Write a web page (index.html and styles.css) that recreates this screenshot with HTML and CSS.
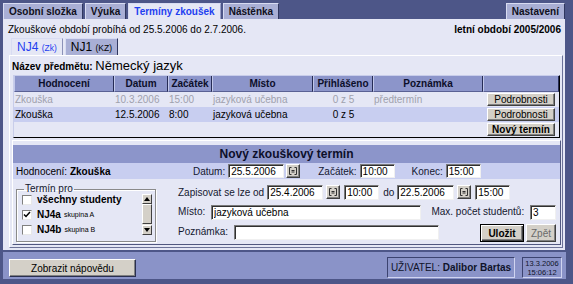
FILE: index.html
```html
<!DOCTYPE html>
<html lang="cs">
<head>
    <meta charset="UTF-8">
    <title>Termíny zkoušek</title>
    <link rel="stylesheet" href="styles.css">
</head>
<body>
<div class="topbar">
    <div class="tabs">
        <span class="tab">Osobní složka</span>
        <span class="tab">Výuka</span>
        <span class="tab active">Termíny zkoušek</span>
        <span class="tab">Nástěnka</span>
    </div>
    <span class="tab">Nastavení</span>
</div>

<div class="panel">
    <div class="info">
        <span>Zkouškové období probíhá od 25.5.2006 do 2.7.2006.</span>
        <b>letní období 2005/2006</b>
    </div>

    <div class="subtabs">
        <span class="subtab active">NJ4 <small>(Zk)</small></span>
        <span class="subtab">NJ1 <small>(KZ)</small></span>
    </div>

    <div class="box">
        <div class="subject"><b>Název předmětu:</b> <span class="subject-name">Německý jazyk</span></div>

        <table class="terms">
            <colgroup>
                <col style="width: 100px">
                <col style="width: 54px">
                <col style="width: 44px">
                <col style="width: 101px">
                <col style="width: 60px">
                <col style="width: 110px">
                <col>
            </colgroup>
            <thead>
            <tr>
                <th>Hodnocení</th>
                <th>Datum</th>
                <th>Začátek</th>
                <th>Místo</th>
                <th>Přihlášeno</th>
                <th>Poznámka</th>
                <th></th>
            </tr>
            </thead>
            <tbody>
            <tr class="past">
                <td>Zkouška</td>
                <td>10.3.2006</td>
                <td>15:00</td>
                <td>jazyková učebna</td>
                <td class="center">0 z 5</td>
                <td>předtermín</td>
                <td class="right"><button class="btn">Podrobnosti</button></td>
            </tr>
            <tr class="selected">
                <td>Zkouška</td>
                <td>12.5.2006</td>
                <td>8:00</td>
                <td>jazyková učebna</td>
                <td class="center">0 z 5</td>
                <td></td>
                <td class="right"><button class="btn">Podrobnosti</button></td>
            </tr>
            <tr>
                <td colspan="6"></td>
                <td class="right"><button class="btn bold">Nový termín</button></td>
            </tr>
            </tbody>
        </table>

        <div class="newterm">
            <div class="newterm-title">Nový zkouškový termín</div>

            <div class="first-row">
                <span class="grade">Hodnocení: <b>Zkouška</b></span>
                <span class="lbl">Datum:</span>
                <input class="field w56" value="25.5.2006">
                <span class="cal"><svg width="8" height="8" viewBox="0 0 8 8"><path d="M2.5 0.5h-2v7h2M5.5 0.5h2v7h-2M2.5 3.5h3M2.5 5h3" stroke="#303030" fill="none"/></svg></span>
                <span class="lbl gap18">Začátek:</span>
                <input class="field w35" value="10:00">
                <span class="lbl gap17">Konec:</span>
                <input class="field w35" value="15:00">
            </div>

            <div class="newterm-body">
                <fieldset class="targets">
                    <legend>Termín pro</legend>
                    <div class="target-list">
                        <div class="targets-rows">
                            <div class="target"><span class="check"></span><b>všechny studenty</b></div>
                            <div class="target"><span class="check"><svg width="8" height="8" viewBox="0 0 8 8"><path d="M1 3.5l2 2 4-4.5" stroke="#000" stroke-width="1.5" fill="none"/></svg></span><b>NJ4a</b> <small>skupina A</small></div>
                            <div class="target"><span class="check"></span><b>NJ4b</b> <small>skupina B</small></div>
                        </div>
                        <div class="scrollbar">
                            <span class="arrow"><svg width="6" height="4" viewBox="0 0 6 4"><path d="M0 4L3 0 6 4z" fill="#000"/></svg></span>
                            <span class="thumb"></span>
                            <span class="arrow down"><svg width="6" height="4" viewBox="0 0 6 4"><path d="M0 0L3 4 6 0z" fill="#000"/></svg></span>
                        </div>
                    </div>
                </fieldset>

                <div class="fields">
                    <div class="frow">
                        <span class="lbl">Zapisovat se lze od</span>
                        <input class="field w56" value="25.4.2006">
                        <span class="cal"><svg width="8" height="8" viewBox="0 0 8 8"><path d="M2.5 0.5h-2v7h2M5.5 0.5h2v7h-2M2.5 3.5h3M2.5 5h3" stroke="#303030" fill="none"/></svg></span>
                        <input class="field w35" value="10:00">
                        <span class="lbl do">do</span>
                        <input class="field w57" value="22.5.2006">
                        <span class="cal"><svg width="8" height="8" viewBox="0 0 8 8"><path d="M2.5 0.5h-2v7h2M5.5 0.5h2v7h-2M2.5 3.5h3M2.5 5h3" stroke="#303030" fill="none"/></svg></span>
                        <input class="field w35" value="15:00">
                    </div>
                    <div class="frow split">
                        <span><span class="lbl">Místo:</span> <input class="field w210" value="jazyková učebna"></span>
                        <span><span class="lbl">Max. počet studentů:</span> <input class="field w26" value="3"></span>
                    </div>
                    <div class="frow split">
                        <span><span class="lbl">Poznámka:</span> <input class="field w205" value=""></span>
                        <span class="actions">
                            <button class="btn default">Uložit</button>
                            <button class="btn muted">Zpět</button>
                        </span>
                    </div>
                </div>
            </div>
        </div>
    </div>
</div>

<div class="footer">
    <button class="btn help">Zobrazit nápovědu</button>
    <div class="status">
        <span class="user">UŽIVATEL: <b>Dalibor Bartas</b></span>
        <span class="clock">13.3.2006<br>15:06:12</span>
    </div>
</div>
</body>
</html>
```

FILE: styles.css
```css
body {
    margin: 0;
    width: 573px;
    height: 284px;
    overflow: hidden;
    background-color: #4d5688;
    font-family: "Liberation Sans", Arial, sans-serif;
    font-size: 10px;
    color: #000;
}

.topbar {
    height: 19px;
    display: flex;
    justify-content: space-between;
    align-items: flex-end;
    padding: 0 8px 0 3px;
}

.tabs {
    display: flex;
    gap: 2px;
}

.tab {
    height: 15px;
    line-height: 16px;
    padding: 0 5px;
    background-color: #a9afd5;
    border-top: 1px solid #d8dcf2;
    border-left: 1px solid #d8dcf2;
    border-right: 1px solid #30375f;
    font-size: 10px;
    font-weight: bold;
    color: #101020;
}

.tab.active {
    background-color: #e5e7f5;
    color: #1f40f0;
    border-right-color: #9aa0c8;
}

.panel {
    height: 231px;
    margin: 0 8px 2px 3px;
    background-color: #e5e7f5;
    display: flex;
    flex-direction: column;
}

.info {
    display: flex;
    justify-content: space-between;
    height: 12px;
    line-height: 12px;
    padding: 5px 4px 0 5px;
}

.subtabs {
    display: flex;
    gap: 2px;
    margin-top: 2px;
    padding-left: 8px;
    height: 17px;
}

.subtab {
    line-height: 17px;
    padding: 0 5px;
    font-size: 12px;
    background-color: #a9afd5;
    border-right: 1px solid #30375f;
    border-top: 1px solid #d8dcf2;
    border-left: 1px solid #d8dcf2;
    box-sizing: border-box;
    height: 17px;
}

.subtab small {
    font-size: 8.5px;
}

.subtab.active {
    color: #1f40f0;
    background-color: #e5e7f5;
    border-right-color: #8c92b8;
}

.box {
    flex: 1;
    margin: 0 2px 2px 6px;
    border: 1px solid;
    border-color: #fff #6c7298 #6c7298 #fff;
}

.subject {
    height: 19px;
    line-height: 19px;
    padding-left: 2px;
}

.subject-name {
    font-size: 13px;
}

.terms {
    margin-left: 3px;
    width: 547px;
    table-layout: fixed;
    border-collapse: separate;
    border-spacing: 0;
    border: 1px solid;
    border-color: #c8cdea #000 #000 #c8cdea;
}

.terms th {
    height: 15px;
    padding: 0;
    background-color: #8c95ca;
    font-weight: bold;
    color: #0c0f2a;
    border-left: 1px solid #c2c8ea;
    border-right: 1px solid #262c55;
    border-bottom: 1px solid #5a6194;
}

.terms td {
    height: 15px;
    padding: 0 0 0 1px;
    white-space: nowrap;
}

.terms td.center {
    text-align: center;
}

.terms td.right {
    text-align: right;
    padding-right: 4px;
}

.terms tr.past td {
    color: #9fa1ad;
}

.terms tr.selected td {
    background-color: #c8cef0;
}

.btn {
    font-family: "Liberation Sans", Arial, sans-serif;
    font-size: 10px;
    color: #000;
    background-color: #d4d0c8;
    border: 1px solid;
    border-color: #fff #404040 #404040 #fff;
    box-shadow: inset -1px -1px 0 #808080;
    padding: 0 3px;
    height: 13px;
    line-height: 11px;
    vertical-align: middle;
}

.terms .btn {
    width: 68px;
}

.bold {
    font-weight: bold;
}

.newterm {
    margin: 2px 1px 0 2px;
    height: 103px;
    border: 1px solid;
    border-color: #fff #50577f #50577f #fff;
}

.newterm-title {
    margin-top: 4px;
    height: 18px;
    line-height: 18px;
    background-color: #8c95ca;
    text-align: center;
    font-size: 12px;
    font-weight: bold;
    color: #0c0f2a;
}

.first-row {
    display: flex;
    align-items: center;
    height: 16px;
    padding-left: 3px;
    background-color: #c8cef0;
}

.grade {
    width: 177px;
}

.lbl {
    color: #141830;
    white-space: nowrap;
}

.gap18 {
    margin-left: 18px;
}

.gap17 {
    margin-left: 17px;
}

.field {
    box-sizing: border-box;
    height: 15px;
    margin-left: 3px;
    padding: 0 2px;
    font-family: "Liberation Sans", Arial, sans-serif;
    font-size: 10px;
    background-color: #fff;
    border: 1px solid;
    border-color: #7a7a7a #f0f0f0 #f0f0f0 #7a7a7a;
    box-shadow: inset 1px 1px 0 #303030;
    outline: none;
    vertical-align: middle;
}

.first-row .field {
    height: 14px;
}

.w26 { width: 26px; }
.w35 { width: 35px; }
.w56 { width: 56px; }
.w57 { width: 57px; }
.w205 { width: 205px; }
.w210 { width: 210px; }

.cal {
    box-sizing: border-box;
    width: 14px;
    height: 14px;
    margin-left: 2px;
    display: inline-flex;
    align-items: center;
    justify-content: center;
    background-color: #d4d0c8;
    border: 1px solid;
    border-color: #fff #404040 #404040 #fff;
    box-shadow: inset -1px -1px 0 #808080;
}

.newterm-body {
    display: flex;
    padding-left: 3px;
}

.targets {
    margin: 5px 0 0 0;
    padding: 1px 3px 1px 5px;
    width: 140px;
    box-sizing: border-box;
    border: 1px solid #8a8a8a;
    box-shadow: 1px 1px 0 #fff, inset 1px 1px 0 #fff;
}

.targets legend {
    padding: 0 1px;
    margin-left: 2px;
    color: #141830;
    line-height: 10px;
}

.target-list {
    display: flex;
    justify-content: space-between;
    margin-top: -3px;
}

.target {
    height: 15px;
    display: flex;
    align-items: center;
    gap: 4px;
    white-space: nowrap;
}

.target small {
    font-size: 7px;
    margin-left: -1px;
}

.check {
    box-sizing: border-box;
    width: 10px;
    height: 10px;
    margin-right: 1px;
    display: inline-flex;
    align-items: center;
    justify-content: center;
    background-color: #fff;
    border: 1px solid;
    border-color: #808080 #e8e8e8 #e8e8e8 #808080;
}

.scrollbar {
    width: 10px;
    height: 41px;
    margin-top: 2px;
    display: flex;
    flex-direction: column;
    background-color: #ece9e2;
}

.arrow, .thumb {
    box-sizing: border-box;
    display: flex;
    align-items: center;
    justify-content: center;
    width: 10px;
    background-color: #d4d0c8;
    border: 1px solid;
    border-color: #fff #404040 #404040 #fff;
}

.arrow {
    height: 10px;
}

.arrow.down {
    margin-top: auto;
}

.thumb {
    height: 20px;
}

.fields {
    flex: 1;
    margin-left: 22px;
    padding: 3px 4px 0 0;
}

.frow {
    height: 20px;
    display: flex;
    align-items: center;
}

.frow.split {
    justify-content: space-between;
}

.do {
    margin: 0 0 0 4px;
}

.frow .cal {
    margin-left: 3px;
}

.frow .cal + .field {
    margin-left: 4px;
}

.actions {
    display: flex;
    gap: 2px;
    margin-top: 2px;
}

.btn.default {
    height: 18px;
    width: 44px;
    font-weight: bold;
    border: 1px solid #000;
    box-shadow: inset 1px 1px 0 #fff, inset -1px -1px 0 #404040, inset -2px -2px 0 #808080;
}

.btn.muted {
    height: 18px;
    width: 30px;
    color: #6a6a6a;
}

.footer {
    height: 27px;
    margin: 0 7px 0 3px;
    display: flex;
    justify-content: space-between;
    align-items: flex-end;
    padding: 0 4px 1px 6px;
    box-sizing: border-box;
    background-color: #8a93c8;
}

.btn.help {
    width: 127px;
    height: 18px;
    margin-bottom: 1px;
    border-color: #fff #2a2f50 #2a2f50 #fff;
}

.status {
    display: flex;
    gap: 7px;
}

.user, .clock {
    box-sizing: border-box;
    height: 21px;
    border: 1px solid;
    border-color: #3c4370 #d0d4f0 #d0d4f0 #3c4370;
    color: #10132a;
}

.user {
    width: 128px;
    line-height: 19px;
    text-align: center;
}

.clock {
    width: 40px;
    font-size: 7.5px;
    line-height: 9px;
    text-align: center;
    padding-top: 1px;
}
```
